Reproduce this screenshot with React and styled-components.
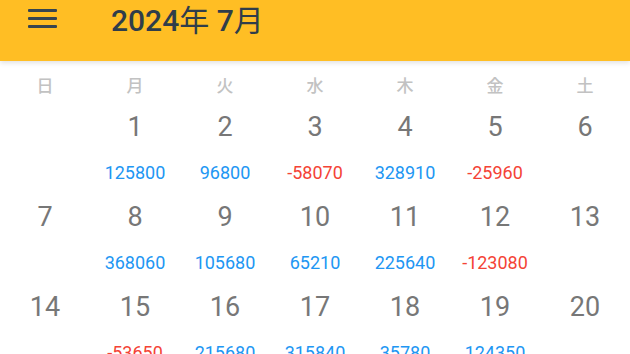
import styled, { createGlobalStyle } from "styled-components";

const GlobalStyle = createGlobalStyle`
  html, body { margin: 0; padding: 0; background: #fff; }
  body { font-family: Roboto, "Noto Sans CJK JP", sans-serif; overflow: hidden; }
`;

const Page = styled.div`
  width: 630px;
  height: 354px;
  overflow: hidden;
  background: #fff;
`;

const Header = styled.header`
  height: 61px;
  background: #ffbe24;
  display: flex;
  align-items: flex-start;
  padding: 4px 0 0 28px;
  box-sizing: border-box;
  gap: 54px;
  box-shadow: 0 2px 5px rgba(0, 0, 0, 0.12);
  position: relative;
  z-index: 1;
`;

const MenuButton = styled.div`
  width: 29px;
  height: 19px;
  margin-top: 5px;
  display: flex;
  flex-direction: column;
  justify-content: space-between;
  span {
    display: block;
    height: 3px;
    background: #36454f;
    border-radius: 1px;
  }
`;

const Title = styled.h1`
  margin: 0;
  font-family: Roboto, "Noto Sans CJK JP", sans-serif;
  font-size: 30px;
  font-weight: 500;
  line-height: 34px;
  color: #2f3d4a;
  span {
    font-weight: 400;
  }
`;

const Grid = styled.div`
  display: grid;
  grid-template-columns: repeat(7, 90px);
`;

const WeekLabel = styled.div`
  height: 46px;
  display: flex;
  align-items: center;
  justify-content: center;
  font-family: "Noto Sans CJK JP", sans-serif;
  font-size: 17px;
  font-weight: 500;
  color: #c2c2c2;
`;

const DayCell = styled.div`
  height: 90px;
  display: flex;
  flex-direction: column;
  align-items: center;
`;

const DayNum = styled.div`
  margin-top: 4px;
  height: 32px;
  line-height: 32px;
  font-size: 27px;
  font-weight: 400;
  color: #777;
`;

const Amount = styled.div`
  margin-top: 18px;
  height: 24px;
  line-height: 24px;
  font-size: 18px;
  color: ${(p) => (p.$neg ? "#f44336" : "#2196f3")};
`;

const weekdays = ["日", "月", "火", "水", "木", "金", "土"];

const amounts = {
  1: 125800, 2: 96800, 3: -58070, 4: 328910, 5: -25960,
  8: 368060, 9: 105680, 10: 65210, 11: 225640, 12: -123080,
  15: -53650, 16: 215680, 17: 315840, 18: 35780, 19: 124350,
};

export default function App() {
  const cells = [null];
  for (let d = 1; d <= 20; d++) cells.push(d);
  return (
    <Page>
      <GlobalStyle />
      <Header>
        <MenuButton>
          <span />
          <span />
          <span />
        </MenuButton>
        <Title>
          2024<span>年</span> 7<span>月</span>
        </Title>
      </Header>
      <Grid>
        {weekdays.map((w) => (
          <WeekLabel key={w}>{w}</WeekLabel>
        ))}
        {cells.map((d, i) => (
          <DayCell key={i}>
            {d && <DayNum>{d}</DayNum>}
            {d && amounts[d] !== undefined && (
              <Amount $neg={amounts[d] < 0}>{amounts[d]}</Amount>
            )}
          </DayCell>
        ))}
      </Grid>
    </Page>
  );
}
